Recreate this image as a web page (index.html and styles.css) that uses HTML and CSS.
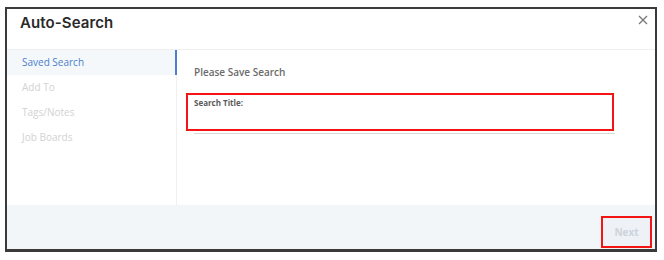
FILE: index.html
```html
<!DOCTYPE html>
<html>
<head>
<meta charset="utf-8">
<link rel="stylesheet" href="styles.css">
</head>
<body>
<div class="dialog">
  <div class="header">
    <h1 class="title">Auto-Search</h1>
    <svg class="close" width="10" height="10" viewBox="0 0 10 10"><path d="M1 1L9 9M9 1L1 9" stroke="#777" stroke-width="1.3" fill="none"/></svg>
  </div>
  <div class="body">
    <div class="sidebar">
      <div class="item active">Saved Search</div>
      <div class="item">Add To</div>
      <div class="item">Tags/Notes</div>
      <div class="item">Job Boards</div>
    </div>
    <div class="main">
      <div class="heading">Please Save Search</div>
      <div class="field">
        <div class="label">Search Title:</div>
      </div>
    </div>
  </div>
  <div class="footer">
    <button class="next">Next</button>
  </div>
</div>
</body>
</html>
```
FILE: styles.css
```css
* { box-sizing: border-box; }
body { margin: 0; background: #fff; font-family: "Open Sans", sans-serif; }
.dialog {
  margin: 7px 0 0 5px;
  width: 652px;
  height: 245px;
  border: 2px solid #3a3a3a;
  border-bottom-width: 3px;
  display: flex;
  flex-direction: column;
  background: #fff;
}
.header {
  height: 41px;
  border-bottom: 1px solid #efefef;
  display: flex;
  align-items: flex-start;
  justify-content: space-between;
  padding: 0 7px 0 13px;
}
.title {
  margin: 4px 0 0 0;
  font-family: "Inter", sans-serif;
  font-weight: 600;
  font-size: 15px;
  color: #2a2a2a;
  line-height: 20px;
  letter-spacing: 0.1px;
}
.close { margin-top: 6px; }
.body { flex: 1; display: flex; }
.sidebar {
  width: 170px;
  border-right: 1px solid #f0f0f0;
}
.item {
  height: 25px;
  line-height: 25px;
  padding-left: 15px;
  font-size: 10px;
  color: #d2d2d2;
}
.item.active {
  background: #f5f8fb;
  color: #4a80cc;
  margin-right: -1px;
  border-right: 2px solid #4a80cc;
}
.main { flex: 1; padding: 14px 40px 0 17px; }
.heading {
  font-size: 10px;
  font-weight: 600;
  color: #6b6b6b;
  line-height: 16px;
}
.field {
  position: relative;
  margin-top: 13px;
  height: 41px;
  border-bottom: 1px solid #d8d8d8;
  padding-top: 5px;
}
.field::before {
  content: "";
  position: absolute;
  left: -8px;
  top: 0;
  right: 1px;
  bottom: 2px;
  border: 2px solid #f41414;
}
.label {
  font-size: 8px;
  font-weight: 700;
  color: #5a5a5a;
  line-height: 10px;
}
.footer {
  height: 44px;
  background: #f3f6f9;
  display: flex;
  justify-content: flex-end;
  align-items: flex-end;
  padding: 0 3px 1px 0;
}
.next {
  width: 51px;
  height: 32px;
  border: 2px solid #f41414;
  background: #eef1f5;
  color: #ccd4dd;
  font-family: "Open Sans", sans-serif;
  font-weight: 700;
  font-size: 10px;
  padding: 0;
}
```
